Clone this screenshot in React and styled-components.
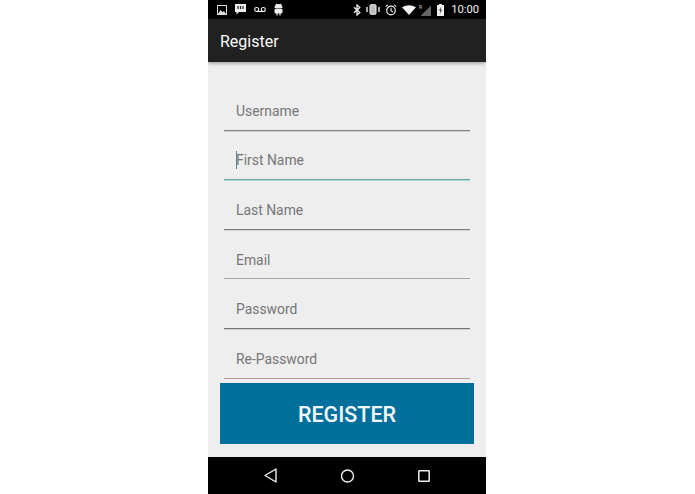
import React from 'react';
import styled, { createGlobalStyle } from 'styled-components';

const GlobalStyle = createGlobalStyle`
  html, body {
    margin: 0;
    padding: 0;
    background: #ffffff;
  }
  body {
    font-family: Roboto, "Liberation Sans", sans-serif;
  }
`;

const Page = styled.div`
  width: 695px;
  height: 494px;
  display: flex;
  justify-content: center;
  padding-right: 1px;
  box-sizing: border-box;
`;

const Phone = styled.div`
  width: 278px;
  height: 494px;
  display: flex;
  flex-direction: column;
  background: #eeeeee;
  overflow: hidden;
`;

const StatusBar = styled.div`
  height: 19px;
  flex: none;
  background: #000;
  display: flex;
  align-items: center;
  justify-content: space-between;
  padding: 0 7px 0 9px;
  color: #f2f2f2;
`;

const IconGroup = styled.div`
  display: flex;
  align-items: center;
  gap: ${({ $gap }) => $gap}px;
`;

const Clock = styled.span`
  font-size: 11.2px;
  margin-left: 2px;
`;

const AppBar = styled.header`
  height: 43px;
  flex: none;
  box-sizing: border-box;
  background: #212121;
  display: flex;
  align-items: center;
  padding: 1px 0 0 12px;
  color: #fafafa;
  font-size: 16px;
  font-weight: 400;
  box-shadow: 0 1px 4px rgba(0, 0, 0, 0.4);
  position: relative;
`;

const Form = styled.form`
  flex: 1;
  display: flex;
  flex-direction: column;
  padding-top: 19px;
`;

const Field = styled.div`
  height: 49.6px;
  margin: 0 16px;
  box-sizing: border-box;
  display: flex;
  align-items: center;
  padding: 11px 0 0 12px;
  position: relative;
  font-size: 13.9px;
  color: #777777;
  border-bottom: 1px solid ${({ $line }) => $line};
  box-shadow: 0 1px 0 ${({ $glow }) => $glow};
`;

const Caret = styled.span`
  position: absolute;
  left: 12px;
  top: 20px;
  width: 1px;
  height: 18px;
  background: #4d9089;
`;

const RegisterButton = styled.button`
  margin: 4px 12px 0;
  height: 61px;
  padding: 2px 0 0;
  border: none;
  background: #006f9c;
  color: #f4f8fa;
  font-family: inherit;
  font-size: 21.5px;
  font-weight: 500;
  flex: none;
`;

const NavBar = styled.nav`
  height: 37px;
  flex: none;
  background: #000;
  display: flex;
  align-items: center;
  justify-content: center;
  gap: 63.5px;
`;

const fields = [
  { name: 'Username', line: '#808080', glow: '#cfcfcf' },
  { name: 'First Name', line: '#5fa79f', glow: '#b5d6d2', focused: true },
  { name: 'Last Name', line: '#7c7c7c', glow: '#d4d4d4' },
  { name: 'Email', line: '#a6a6a6', glow: 'transparent' },
  { name: 'Password', line: '#757575', glow: '#cfcfcf' },
  { name: 'Re-Password', line: '#b39c98', glow: 'transparent' },
];

function StatusIcons() {
  return (
    <IconGroup $gap={8}>
      <svg width="10" height="10" viewBox="0 0 10 10">
        <rect x="0.5" y="0.5" width="9" height="9" fill="none" stroke="#ddd" />
        <path d="M1 9 L3.5 5 L5.5 7 L7 6 L9 9 Z" fill="#ddd" />
      </svg>
      <svg width="11" height="11" viewBox="0 0 11 11">
        <path d="M0 0 H11 V8 H4 L1.5 10.5 V8 H0 Z" fill="#eee" />
        <path d="M3 2 V5 M5.5 2 V5 M8 2 V5" stroke="#222" strokeWidth="1.2" />
      </svg>
      <svg width="12" height="7" viewBox="0 0 12 7">
        <circle cx="2.7" cy="3.5" r="2" fill="none" stroke="#eee" strokeWidth="1.1" />
        <circle cx="9.3" cy="3.5" r="2" fill="none" stroke="#eee" strokeWidth="1.1" />
        <path d="M2.7 5.5 H9.3" stroke="#eee" strokeWidth="1.1" />
      </svg>
      <svg width="9" height="13" viewBox="0 0 9 13">
        <path d="M0.5 5 A4 4 0 0 1 8.5 5 Z" fill="#eee" />
        <rect x="0.5" y="5.5" width="8" height="5" rx="1.5" fill="#eee" />
        <path d="M3 10 V12.5 M6 10 V12.5 M2 1 L3 2.2 M7 1 L6 2.2" stroke="#eee" strokeWidth="1.2" />
      </svg>
    </IconGroup>
  );
}

function SystemIcons() {
  return (
    <IconGroup $gap={5}>
      <svg width="8" height="12" viewBox="0 0 8 12">
        <path d="M1 3.3 L6.8 8.5 L4 11 V1 L6.8 3.5 L1 8.7" fill="none" stroke="#eee" strokeWidth="1.3" />
      </svg>
      <svg width="14" height="11" viewBox="0 0 14 11">
        <rect x="4" y="0.7" width="6" height="9.6" rx="1" fill="#bbb" stroke="#eee" />
        <path d="M1 3 V8 M13 3 V8" stroke="#eee" strokeWidth="1.4" />
      </svg>
      <svg width="12" height="12" viewBox="0 0 12 12">
        <circle cx="6" cy="6.5" r="4.3" fill="none" stroke="#eee" strokeWidth="1.2" />
        <path d="M6 3.8 V6.8 L8 8 M0.7 2.6 L2.8 0.8 M11.3 2.6 L9.2 0.8" fill="none" stroke="#eee" strokeWidth="1.1" />
      </svg>
      <svg width="14" height="10" viewBox="0 0 14 10">
        <path d="M0 2.2 Q7 -1.8 14 2.2 L7 10 Z" fill="#f5f5f5" />
      </svg>
      <svg width="12" height="12" viewBox="0 0 12 12" style={{ marginLeft: -2 }}>
        <path d="M12 1.5 V12 H1.5 Z" fill="#666" />
        <text x="0" y="4.5" fontSize="5" fill="#ccc" fontFamily="Roboto, sans-serif">R</text>
      </svg>
      <svg width="7" height="12" viewBox="0 0 7 12" style={{ marginLeft: 1 }}>
        <path d="M2 0 H5 V1 H7 V12 H0 V1 H2 Z" fill="#eee" />
        <path d="M4.3 2.5 L2 6.5 H3.5 L2.7 10 L5 5.7 H3.5 Z" fill="#222" />
      </svg>
      <Clock>10:00</Clock>
    </IconGroup>
  );
}

export default function App() {
  return (
    <>
      <GlobalStyle />
      <Page>
        <Phone>
          <StatusBar>
            <StatusIcons />
            <SystemIcons />
          </StatusBar>
          <AppBar>Register</AppBar>
          <Form onSubmit={(e) => e.preventDefault()}>
            {fields.map((f) => (
              <Field key={f.name} $line={f.line} $glow={f.glow}>
                {f.focused && <Caret />}
                {f.name}
              </Field>
            ))}
            <RegisterButton>REGISTER</RegisterButton>
          </Form>
          <NavBar>
            <svg width="13" height="15" viewBox="0 0 13 15">
              <path d="M12 1 V14 L1 7.5 Z" fill="none" stroke="#eee" strokeWidth="1.4" strokeLinejoin="round" />
            </svg>
            <svg width="14" height="14" viewBox="0 0 14 14">
              <circle cx="6.5" cy="7" r="6" fill="none" stroke="#eee" strokeWidth="1.4" />
            </svg>
            <svg width="12" height="12" viewBox="0 0 12 12">
              <rect x="0.8" y="0.8" width="10.4" height="10.4" fill="none" stroke="#eee" strokeWidth="1.5" rx="0.5" />
            </svg>
          </NavBar>
        </Phone>
      </Page>
    </>
  );
}
